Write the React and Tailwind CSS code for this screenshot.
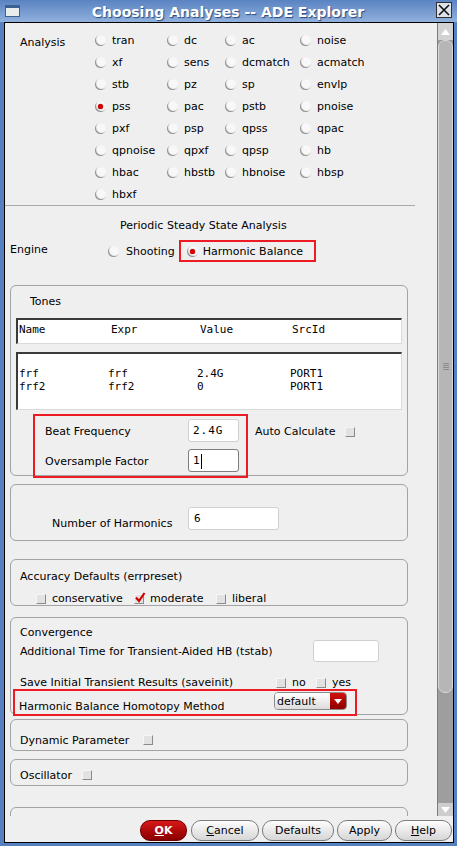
import React from 'react';

const sans = "font-['DejaVu_Sans',sans-serif]";
const mono = "font-['DejaVu_Sans_Mono',monospace]";

const analyses = [
  ['tran', 'dc', 'ac', 'noise'],
  ['xf', 'sens', 'dcmatch', 'acmatch'],
  ['stb', 'pz', 'sp', 'envlp'],
  ['pss', 'pac', 'pstb', 'pnoise'],
  ['pxf', 'psp', 'qpss', 'qpac'],
  ['qpnoise', 'qpxf', 'qpsp', 'hb'],
  ['hbac', 'hbstb', 'hbnoise', 'hbsp'],
  ['hbxf'],
];

const Radio = ({ on }) => (
  <span className="relative inline-block w-[11px] h-[11px] shrink-0 rounded-full bg-[#f8f8f8] shadow-[inset_1px_-1px_1px_#8c8c8c]">
    {on && (
      <span className="absolute left-[3px] top-[3px] w-[5px] h-[5px] rounded-full bg-[#d80000] shadow-[0_0_1px_#700000]" />
    )}
  </span>
);

const Check = ({ on }) => (
  <span className="relative inline-block w-[10px] h-[10px] shrink-0 bg-[#e2e2e2] border border-t-[#f6f6f6] border-l-[#f6f6f6] border-r-[#8a8a8a] border-b-[#8a8a8a]">
    {on && (
      <svg className="absolute left-[-1px] top-[-3px]" width="12" height="12" viewBox="0 0 12 12">
        <path d="M2 5.5 L5 9 L10.5 1" stroke="#d00000" strokeWidth="2.2" fill="none" />
      </svg>
    )}
  </span>
);

const Group = ({ className, children }) => (
  <div className={'ml-[5px] w-[398px] rounded-[6px] border border-[#a3a3a3] ' + className}>{children}</div>
);

const Button = ({ children, className }) => (
  <div
    className={
      'h-[21px] pt-[2px] rounded-[10px] border border-[#7c7c7c] bg-linear-to-b from-[#fdfdfd] to-[#d6d6d6] flex items-center justify-center ' +
      className
    }
  >
    {children}
  </div>
);

export default function App() {
  return (
    <div className={`w-[457px] h-[846px] flex flex-col bg-[#5680bf] text-[11px] text-black ${sans}`}>
      {/* Title bar */}
      <div className="h-[22px] shrink-0 flex items-center bg-linear-to-b from-[#5a83c2] to-[#91b1dd]">
        <div className="ml-[5px] w-[15px] h-[12px] border border-[#3d5f92] border-t-[3px] bg-[#e9ecec]" />
        <div className="flex-1 pt-[2px] text-center text-white font-bold text-[14px] leading-[18px] [text-shadow:1px_1px_1px_#2a4a7c]">
          Choosing Analyses -- ADE Explorer
        </div>
        <div className="mr-[5px] mb-[3px] w-[16px] h-[16px] border border-[#303030] bg-[#dde3ea] flex items-center justify-center">
          <svg width="12" height="12" viewBox="0 0 12 12">
            <path d="M1 1 L11 11 M11 1 L1 11" stroke="#111" strokeWidth="1.6" />
          </svg>
        </div>
      </div>

      {/* Window body */}
      <div className="flex-1 min-h-0 ml-[4px] mr-[3px] mb-[3px] border border-black bg-[#efefef] flex flex-col">
        <div className="h-[793px] shrink-0 flex">
          {/* Scrolled form */}
          <div className="w-[432px] overflow-hidden">
            {/* Analysis */}
            <div className="flex pt-[6px]">
              <div className="w-[90px] pl-[15px] pt-[7px] leading-[14px]">Analysis</div>
              <div className="grid grid-cols-[72px_58px_75px_80px]">
                {analyses.flat().map((a) => (
                  <div key={a} className="h-[22px] flex items-center gap-[6px]">
                    <Radio on={a === 'pss'} />
                    <span className="pt-[2px] leading-[14px]">{a}</span>
                  </div>
                ))}
              </div>
            </div>
            <div className="w-[410px] h-px bg-[#a9a9a9]" />

            <div className="mt-[13px] pl-[115px] leading-[14px]">Periodic Steady State Analysis</div>

            {/* Engine */}
            <div className="mt-[7px] h-[22px] flex items-center">
              <div className="w-[103px] pl-[5px] mb-[2px] leading-[14px]">Engine</div>
              <Radio />
              <span className="ml-[7px] pt-[2px] leading-[14px]">Shooting</span>
              <div className="ml-[4px] h-[22px] w-[137px] border-2 border-[#ed1c24] flex items-center pl-[6px] gap-[5px]">
                <Radio on />
                <span className="pt-[2px] leading-[14px]">Harmonic Balance</span>
              </div>
            </div>

            {/* Tones */}
            <Group className="mt-[23px] h-[191px]">
              <div className="pt-[9px] pl-[19px] leading-[14px]">Tones</div>
              <div
                className={`mt-[9px] ml-[5px] w-[386px] h-[26px] bg-white border-t-2 border-l-2 border-[#3a3a3a] border-r border-b border-r-[#dadada] border-b-[#dadada] pl-[1px] pt-[3px] leading-[14px] grid grid-cols-[92px_89px_92px_auto] ${mono}`}
              >
                <span>Name</span>
                <span>Expr</span>
                <span>Value</span>
                <span>SrcId</span>
              </div>
              <div
                className={`mt-[8px] ml-[5px] w-[386px] h-[58px] bg-white border-t-2 border-l-2 border-[#3a3a3a] border-r border-b border-r-[#dadada] border-b-[#dadada] pl-[1px] pt-[13px] leading-[13px] ${mono}`}
              >
                <div className="grid grid-cols-[89px_89px_93px_auto]">
                  <span>frf</span>
                  <span>frf</span>
                  <span>2.4G</span>
                  <span>PORT1</span>
                </div>
                <div className="grid grid-cols-[89px_89px_93px_auto]">
                  <span>frf2</span>
                  <span>frf2</span>
                  <span>0</span>
                  <span>PORT1</span>
                </div>
              </div>
              <div className="mt-[4px] flex items-start">
                <div className="ml-[22px] w-[215px] h-[64px] border-2 border-[#ed1c24] pt-[3px] flex flex-col gap-[7px]">
                  <div className="flex items-center">
                    <div className="w-[153px] pl-[10px] pt-[2px] leading-[14px]">Beat Frequency</div>
                    <div className={`w-[51px] h-[23px] bg-white border border-[#d0d0d0] rounded-[3px] pl-[4px] pt-px flex items-center tracking-[1px] ${mono}`}>
                      2.4G
                    </div>
                  </div>
                  <div className="flex items-center">
                    <div className="w-[153px] pl-[10px] pt-[2px] leading-[14px]">Oversample Factor</div>
                    <div className={`w-[51px] h-[23px] bg-white border border-[#7e7e7e] rounded-[3px] pl-[4px] pt-px flex items-center ${mono}`}>
                      1<span className="ml-[1px] w-px h-[15px] bg-black" />
                    </div>
                  </div>
                </div>
                <div className="ml-[7px] mt-[11px] flex items-center gap-[10px] leading-[14px]">
                  <span>Auto Calculate</span>
                  <Check />
                </div>
              </div>
            </Group>

            {/* Harmonics */}
            <Group className="mt-[8px] h-[57px] flex items-start">
              <div className="w-[177px] pl-[41px] mt-[32px] leading-[14px]">Number of Harmonics</div>
              <div className={`mt-[22px] w-[91px] h-[23px] bg-white border border-[#d0d0d0] rounded-[3px] pl-[5px] pt-px flex items-center ${mono}`}>
                6
              </div>
            </Group>

            {/* Accuracy */}
            <Group className="mt-[18px] h-[47px]">
              <div className="pt-[10px] pl-[9px] leading-[14px]">Accuracy Defaults (errpreset)</div>
              <div className="mt-[8px] pl-[25px] flex items-center leading-[14px]">
                <div className="w-[98px] flex items-center gap-[6px]">
                  <Check />
                  <span>conservative</span>
                </div>
                <div className="w-[82px] flex items-center gap-[6px]">
                  <Check on />
                  <span>moderate</span>
                </div>
                <div className="flex items-center gap-[6px]">
                  <Check />
                  <span>liberal</span>
                </div>
              </div>
            </Group>

            {/* Convergence */}
            <Group className="mt-[11px] h-[98px]">
              <div className="pt-[8px] pl-[9px] leading-[14px]">Convergence</div>
              <div className="flex items-center">
                <div className="w-[302px] pl-[9px] pt-[2px] leading-[14px]">Additional Time for Transient-Aided HB (tstab)</div>
                <div className="w-[66px] h-[22px] bg-white border border-[#d0d0d0] rounded-[3px]" />
              </div>
              <div className="mt-[14px] flex items-center leading-[14px]">
                <div className="w-[265px] pl-[9px]">Save Initial Transient Results (saveinit)</div>
                <div className="w-[40px] flex items-center gap-[6px]">
                  <Check />
                  <span>no</span>
                </div>
                <div className="flex items-center gap-[6px]">
                  <Check />
                  <span>yes</span>
                </div>
              </div>
              <div className="-mt-px ml-[2px] w-[344px] h-[27px] border-2 border-[#ed1c24] flex items-start">
                <div className="w-[259px] pl-[4px] mt-[9px] leading-[14px]">Harmonic Balance Homotopy Method</div>
                <div className="mt-px w-[73px] h-[18px] rounded-[4px] border border-[#8a8a8a] flex overflow-hidden">
                  <div className="flex-1 bg-linear-to-b from-[#ffffff] to-[#dcdcdc] pl-[2px] pt-px leading-[16px]">default</div>
                  <div className="w-[16px] bg-linear-to-b from-[#d41010] to-[#8e0000] flex items-center justify-center">
                    <svg width="8" height="5" viewBox="0 0 8 5">
                      <path d="M0 0 L8 0 L4 5 Z" fill="#fff" />
                    </svg>
                  </div>
                </div>
              </div>
            </Group>

            {/* Dynamic Parameter */}
            <Group className="mt-[4px] h-[32px] pt-[14px] pl-[9px] flex items-start leading-[14px]">
              <span>Dynamic Parameter</span>
              <span className="ml-[14px] mt-px">
                <Check />
              </span>
            </Group>

            {/* Oscillator */}
            <Group className="mt-[8px] h-[27px] pt-[9px] pl-[9px] flex items-start leading-[14px]">
              <span>Oscillator</span>
              <span className="ml-[10px] mt-px">
                <Check />
              </span>
            </Group>

            <Group className="mt-[21px] h-[40px]" />
          </div>

          {/* Scrollbar */}
          <div className="w-[16px] flex flex-col border-l border-[#7d7d7d] bg-[#9e9e9e]">
            <div className="h-[17px] bg-[#d2d2d2] flex items-center justify-center">
              <svg width="9" height="6" viewBox="0 0 9 6">
                <path d="M4.5 0 L9 6 L0 6 Z" fill="#fff" />
              </svg>
            </div>
            <div className="h-[653px] rounded-[7px] bg-[#b6b6b6] border border-[#d8d8d8] flex flex-col items-center justify-center gap-[1px]">
              <span className="w-[6px] h-px bg-[#8a8a8a]" />
              <span className="w-[6px] h-px bg-[#8a8a8a]" />
              <span className="w-[6px] h-px bg-[#8a8a8a]" />
              <span className="w-[6px] h-px bg-[#8a8a8a]" />
            </div>
            <div className="flex-1" />
            <div className="h-[13px] bg-[#cdcdcd] flex items-center justify-center">
              <svg width="9" height="6" viewBox="0 0 9 6">
                <path d="M0 0 L9 0 L4.5 6 Z" fill="#fff" />
              </svg>
            </div>
          </div>
        </div>

        {/* Buttons */}
        <div className="flex-1 flex justify-end items-start pt-[4px] pr-px gap-[3px]">
          <div className="mr-px w-[47px] h-[21px] pt-[2px] rounded-[10px] border border-[#6a0000] bg-linear-to-b from-[#d81818] to-[#8a0000] flex items-center justify-center text-white font-bold">
            <span>
              <span className="underline">O</span>K
            </span>
          </div>
          <Button className="w-[68px]">
            <span>
              <span className="underline">C</span>ancel
            </span>
          </Button>
          <Button className="w-[72px]">Defaults</Button>
          <Button className="w-[55px]">Apply</Button>
          <Button className="w-[57px]">
            <span>
              <span className="underline">H</span>elp
            </span>
          </Button>
        </div>
      </div>
    </div>
  );
}
